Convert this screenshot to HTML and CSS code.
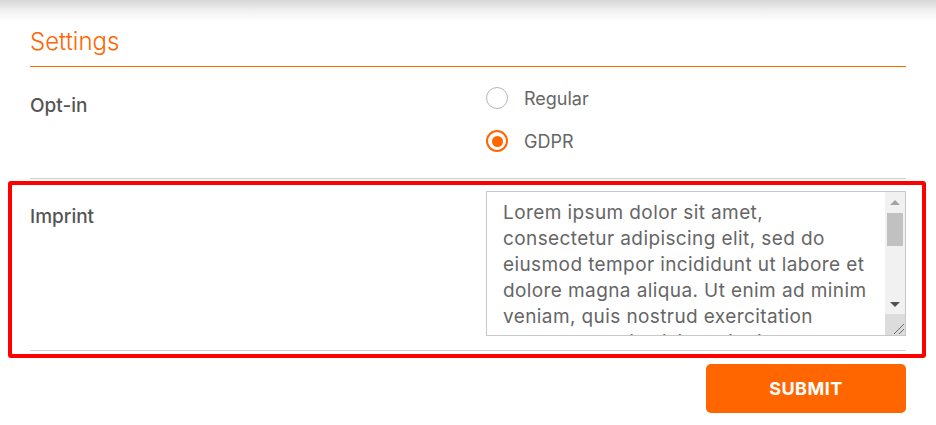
FILE: index.html
```html
<!DOCTYPE html>
<html lang="en">
<head>
    <meta charset="UTF-8">
    <meta name="viewport" content="width=device-width, initial-scale=1.0">
    <title>Settings</title>
    <link rel="stylesheet" href="styles.css">
</head>
<body>

    <div class="top-shadow"></div>

    <form class="settings">
        <h2 class="settings-title">Settings</h2>

        <div class="row">
            <div class="row-label label-optin">Opt-in</div>
            <div class="row-field radios">
                <label class="radio-option">
                    <span class="radio"></span>
                    <span>Regular</span>
                </label>
                <label class="radio-option">
                    <span class="radio checked"></span>
                    <span>GDPR</span>
                </label>
            </div>
        </div>

        <div class="row row-imprint highlighted">
            <div class="row-label">Imprint</div>
            <div class="row-field">
                <div class="textbox">
                    <textarea class="imprint">Lorem ipsum dolor sit amet, consectetur adipiscing elit, sed do eiusmod tempor incididunt ut labore et dolore magna aliqua. Ut enim ad minim veniam, quis nostrud exercitation ullamco laboris nisi ut aliquip ex ea commodo consequat. Duis aute irure dolor in reprehenderit in voluptate velit esse cillum dolore eu fugiat nulla pariatur. Excepteur sint occaecat cupidatat non proident, sunt in culpa qui officia deserunt mollit anim id est laborum.</textarea>
                    <!-- scrollbar drawn by hand, the headless browser hides the real one -->
                    <div class="scrollbar">
                        <span class="scroll-btn"><span class="arrow-up"></span></span>
                        <span class="scroll-track"><span class="scroll-thumb"></span></span>
                        <span class="scroll-btn"><span class="arrow-down"></span></span>
                        <span class="resizer">
                            <svg width="20" height="21" viewBox="0 0 20 21">
                                <path d="M9 20 L19 10 M14 20 L19 15" stroke="#6a6a6a" stroke-width="1" fill="none"/>
                            </svg>
                        </span>
                    </div>
                </div>
            </div>
        </div>

        <div class="actions">
            <button type="button" class="submit">SUBMIT</button>
        </div>
    </form>

</body>
</html>
```

FILE: styles.css
```css
/* General reset */
* {
    margin: 0;
    padding: 0;
    box-sizing: border-box;
}

body {
    font-family: 'Inter', 'Open Sans', sans-serif;
    color: #666;
    background: #fff;
}

/* shadow left by the header above */
.top-shadow {
    height: 22px;
    background: linear-gradient(#d6d6d6, #f4f4f4 55%, #fff);
}

.settings {
    padding: 0 30px;
}

.settings-title {
    font-size: 24px;
    font-weight: 300;
    color: #ff6600;
    line-height: 28px;
    padding: 6px 0 10px;
    border-bottom: 1px solid #ff6600;
}

.row {
    display: grid;
    grid-template-columns: 456px 1fr;
    border-bottom: 1px solid #d0d0d0;
}

.row-label {
    font-size: 19px;
    font-weight: 500;
    color: #555;
    padding-top: 26px;
}

.label-optin {
    padding-top: 27px;
}

.radios {
    display: flex;
    flex-direction: column;
    gap: 21px;
    padding: 20px 0 26px;
}

.radio-option {
    display: flex;
    align-items: center;
    gap: 16px;
    font-size: 18px;
    color: #666;
    height: 22px;
}

.radio {
    width: 22px;
    height: 22px;
    border: 1.5px solid #b5b5b5;
    border-radius: 50%;
    display: flex;
    align-items: center;
    justify-content: center;
}

.radio.checked {
    border: 2px solid #ff6600;
}

.radio.checked::after {
    content: "";
    width: 11px;
    height: 11px;
    border-radius: 50%;
    background: #ff6600;
}

.row-imprint .row-field {
    padding: 12px 0 14px;
}

.textbox {
    display: flex;
    width: 420px;
    height: 145px;
    border: 1px solid #c8c8c8;
}

.imprint {
    flex: 1;
    border: none;
    outline: none;
    resize: none;
    overflow: hidden;
    padding: 8px 12px 8px 16px;
    font-family: inherit;
    font-size: 19px;
    line-height: 26px;
    letter-spacing: 0.4px;
    color: #666;
}

/* classic scrollbar look */
.scrollbar {
    width: 20px;
    display: flex;
    flex-direction: column;
    background: #f1f1f1;
}

.scroll-btn {
    height: 20px;
    display: flex;
    align-items: center;
    justify-content: center;
}

.arrow-up {
    border-left: 5px solid transparent;
    border-right: 5px solid transparent;
    border-bottom: 5px solid #a3a3a3;
}

.arrow-down {
    border-left: 5px solid transparent;
    border-right: 5px solid transparent;
    border-top: 5px solid #505050;
}

.scroll-track {
    flex: 1;
    padding: 1px 2px 0;
}

.scroll-thumb {
    display: block;
    height: 33px;
    background: #c1c1c1;
}

.resizer {
    height: 21px;
    background: #dcdcdc;
}

.resizer svg {
    display: block;
}

/* red highlight around the imprint row */
.highlighted {
    position: relative;
}

.highlighted::after {
    content: "";
    position: absolute;
    top: 2px;
    left: -22px;
    right: -20px;
    bottom: -8px;
    border: 4px solid #ff0000;
    border-radius: 3px;
    pointer-events: none;
}

.actions {
    display: flex;
    justify-content: flex-end;
    padding-top: 13px;
}

.submit {
    width: 200px;
    height: 49px;
    background-color: #ff6600;
    color: #fff;
    border: none;
    border-radius: 5px;
    font-family: inherit;
    font-size: 18px;
    font-weight: 700;
    letter-spacing: 0.5px;
    cursor: pointer;
}
```
